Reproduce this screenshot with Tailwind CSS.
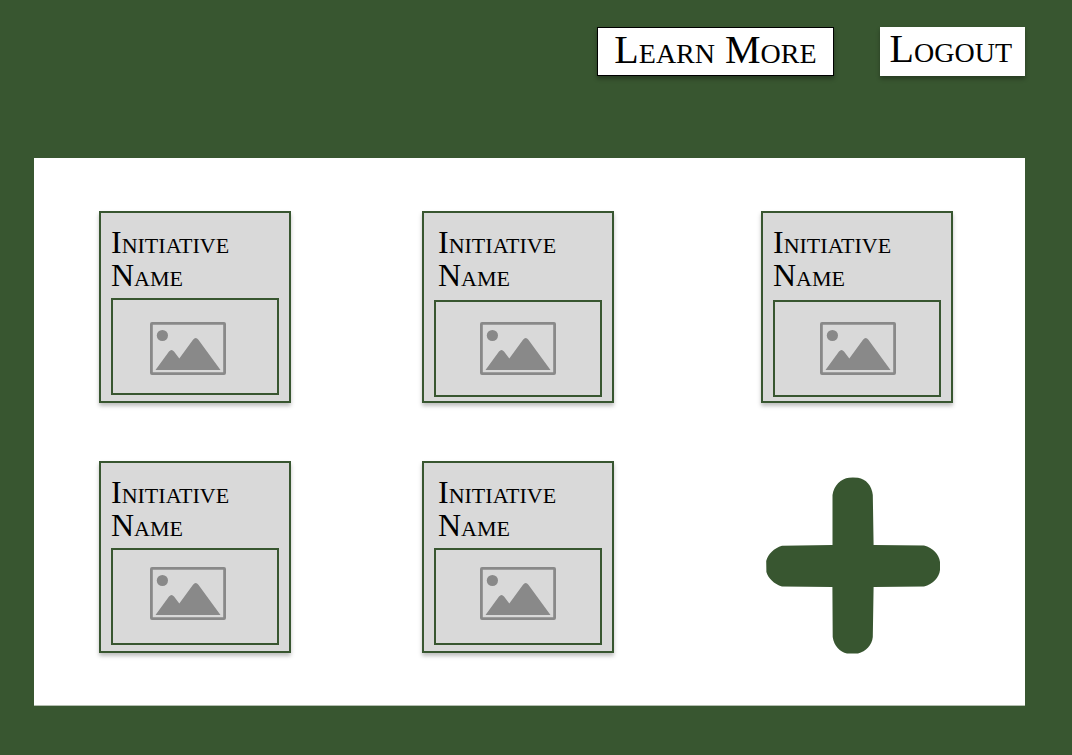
<!DOCTYPE html>
<html lang="en">
<head>
<meta charset="utf-8">
<meta name="viewport" content="width=device-width, initial-scale=1">
<title>Initiatives</title>
<script src="https://cdn.jsdelivr.net/npm/@tailwindcss/browser@4"></script>
</head>
<body class="min-h-screen bg-[#385630] pt-[27px] pr-[47px] pb-[49px] pl-[34px] font-['Liberation_Serif',serif] text-black [font-variant-caps:small-caps]">
<svg class="hidden" aria-hidden="true">
  <symbol id="picture" viewBox="0 0 76 53">
    <rect x="1.4" y="1.4" width="73.2" height="50.2" rx="0.6" fill="none" stroke="#898989" stroke-width="2.8"/>
    <circle cx="12.4" cy="13.5" r="5.6" fill="#898989"/>
    <path d="M5.5 48 L19 29.6 Q21.5 26.4 24 29.6 L29.3 36.4 L43 17.7 Q45.7 14.3 48.4 17.7 L70.500 48 Z" fill="#898989"/>
  </symbol>
</svg>
<header class="flex justify-end gap-[46px]">
  <button type="button" class="h-[49px] border border-black bg-white px-4 pb-[5px] text-[40px] leading-[44px] whitespace-nowrap shadow-[0_3px_4px_rgba(0,0,0,0.3)] [font-variant-caps:small-caps]">Learn More</button>
  <button type="button" class="h-[49px] bg-white pr-[13px] pb-[5px] pl-[10px] text-[40px] leading-[44px] shadow-[0_3px_4px_rgba(0,0,0,0.3)] [font-variant-caps:small-caps]">Logout</button>
</header>
<main class="mt-[82px] grid grid-cols-[323fr_339fr_264fr] items-start gap-y-[58px] border-b border-[#b4beb0] bg-white pt-[53px] pb-[51px] pl-[65px]">
  <article class="h-[192px] w-[192px] border-2 border-[#385630] bg-[#d9d9d9] px-[10px] pt-[13px] shadow-[0_3px_4px_rgba(0,0,0,0.25)]">
    <h2 class="text-[32px] leading-[33px]">Initiative<br>Name</h2>
    <div class="mt-[6px] h-[97px] w-[168px] border-2 border-[#385630] pt-[22px] pl-[37px]">
      <svg class="h-[53px] w-[76px]" role="img" aria-label="Initiative image"><use href="#picture"/></svg>
    </div>
  </article>
  <article class="h-[192px] w-[192px] border-2 border-[#385630] bg-[#d9d9d9] px-[10px] pt-[13px] shadow-[0_3px_4px_rgba(0,0,0,0.25)]">
    <h2 class="pl-1 text-[32px] leading-[33px]">Initiative<br>Name</h2>
    <div class="mt-[8px] h-[97px] w-[168px] border-2 border-[#385630] pt-[20px] pl-[44px]">
      <svg class="h-[53px] w-[76px]" role="img" aria-label="Initiative image"><use href="#picture"/></svg>
    </div>
  </article>
  <article class="h-[192px] w-[192px] border-2 border-[#385630] bg-[#d9d9d9] px-[10px] pt-[13px] shadow-[0_3px_4px_rgba(0,0,0,0.25)]">
    <h2 class="text-[32px] leading-[33px]">Initiative<br>Name</h2>
    <div class="mt-[8px] h-[97px] w-[168px] border-2 border-[#385630] pt-[20px] pl-[45px]">
      <svg class="h-[53px] w-[76px]" role="img" aria-label="Initiative image"><use href="#picture"/></svg>
    </div>
  </article>
  <article class="h-[192px] w-[192px] border-2 border-[#385630] bg-[#d9d9d9] px-[10px] pt-[13px] shadow-[0_3px_4px_rgba(0,0,0,0.25)]">
    <h2 class="text-[32px] leading-[33px]">Initiative<br>Name</h2>
    <div class="mt-[6px] h-[97px] w-[168px] border-2 border-[#385630] pt-[17px] pl-[37px]">
      <svg class="h-[53px] w-[76px]" role="img" aria-label="Initiative image"><use href="#picture"/></svg>
    </div>
  </article>
  <article class="h-[192px] w-[192px] border-2 border-[#385630] bg-[#d9d9d9] px-[10px] pt-[13px] shadow-[0_3px_4px_rgba(0,0,0,0.25)]">
    <h2 class="pl-1 text-[32px] leading-[33px]">Initiative<br>Name</h2>
    <div class="mt-[6px] h-[97px] w-[168px] border-2 border-[#385630] pt-[17px] pl-[44px]">
      <svg class="h-[53px] w-[76px]" role="img" aria-label="Initiative image"><use href="#picture"/></svg>
    </div>
  </article>
  <button type="button" aria-label="Add initiative" class="mt-[16px] ml-[5px] w-[174px]">
    <svg class="block h-[177px] w-[174px]" viewBox="0 0 174 177" fill="#385630" aria-hidden="true">
      <path d="M66.500 68 V18 C68 8 75 1.500 83 0.700 Q87 0.200 92 0.800 C100 2 106 9 106.800 18 L107.600 68 L158 68.500 C167 71 173 77 174 85 V93 C173 101 167 107 158 109.500 L107.600 110 L106.800 160 C106 168 100 174.500 92 176.500 H81 C74 175 68 169 66.700 160 L66.400 110 L16 109.500 C8 107 2 101 0.400 95 L0.200 84 C2 77 8 71 16 68.700 Z"/>
    </svg>
  </button>
</main>
</body>
</html>
